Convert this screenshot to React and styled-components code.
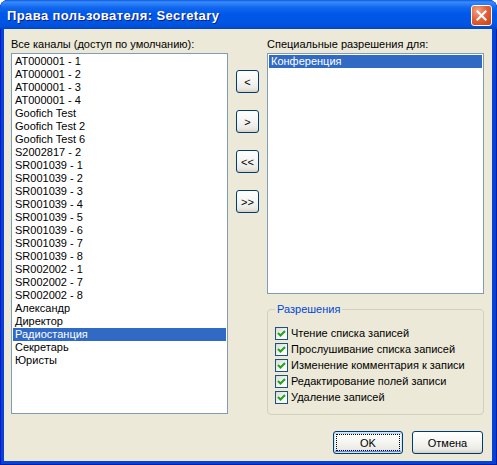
import React from 'react'
import styled, { createGlobalStyle } from "styled-components";

const GlobalStyle = createGlobalStyle`
    html, body { margin: 0; padding: 0; background: #fff; }
    body { font-family: "Liberation Sans", Arial, sans-serif; font-size: 11px; color: #000; }
`;

const Window = styled.div`
    width: 497px;
    height: 465px;
    display: flex;
    flex-direction: column;
    box-sizing: border-box;
    background: #0841d6;
    border-radius: 8px 8px 0 0;
    box-shadow: inset 1px 0 0 #0019cf, inset -1px 0 0 #001ea0, inset 0 -1px 0 #001ea0;
    overflow: hidden;
`;

const TitleBar = styled.div`
    height: 29px;
    flex: none;
    display: flex;
    align-items: center;
    justify-content: space-between;
    padding: 0 5px 0 7px;
    background: linear-gradient(to bottom,
        #0a5ae6 0px, #3c8cf8 2px, #2a7df5 4px, #0e66ee 8px,
        #0058ea 14px, #0056e4 22px, #0052dd 26px, #0046c6 29px);
    border-radius: 8px 8px 0 0;
`;

const Title = styled.span`
    color: #fff;
    font-family: "Liberation Sans", Arial, sans-serif;
    font-weight: bold;
    font-size: 13px;
    letter-spacing: 0.4px;
    text-shadow: 1px 1px 0 #0a1e8a;
    margin-top: 2px;
`;

const CloseButton = styled.div`
    width: 21px;
    height: 21px;
    box-sizing: border-box;
    border: 1px solid #fff;
    border-radius: 3px;
    background: radial-gradient(circle at 30% 25%, #f4a283 0%, #e5623a 45%, #cc3d12 100%);
    display: flex;
    align-items: center;
    justify-content: center;
    margin-top: 2px;
`;

const Client = styled.div`
    flex: 1;
    margin: 0 5px 4px 4px;
    background: #ece9d8;
    padding: 9px 8px 0 7px;
    display: flex;
    flex-direction: column;
`;

const Main = styled.div`
    display: flex;
    gap: 8px;
`;

const Column = styled.div`
    width: 217px;
    display: flex;
    flex-direction: column;
`;

const Label = styled.div`
    line-height: 13px;
    margin-bottom: 2px;
    white-space: nowrap;
`;

const ListBox = styled.div`
    height: ${p => p.$height}px;
    box-sizing: border-box;
    border: 1px solid #7f9db9;
    background: #fff;
    padding: 1px;
    overflow: hidden;
`;

const Item = styled.div`
    height: 13px;
    line-height: 13px;
    padding-left: 2px;
    white-space: nowrap;
    background: ${p => (p.$selected ? "#316ac5" : "transparent")};
    color: ${p => (p.$selected ? "#fff" : "#000")};
`;

const Arrows = styled.div`
    width: 23px;
    display: flex;
    flex-direction: column;
    gap: 17px;
    padding-top: 32px;
`;

const XpButton = styled.button`
    width: ${p => p.$width || 23}px;
    height: 23px;
    box-sizing: border-box;
    padding: 0;
    font-family: "Liberation Sans", Arial, sans-serif;
    font-size: 11px;
    color: #000;
    border: 1px solid #003c74;
    border-radius: 3px;
    background: linear-gradient(to bottom, #ffffff 0%, #f7f7f4 40%, #ecebe6 80%, #d8d4c8 100%);
    box-shadow: ${p => (p.$default
        ? "inset 0 0 0 1px #cee7ff, inset 0 -1px 0 1px #6982ee, inset 0 1px 0 1px #bcd4f6"
        : "inset 0 -1px 0 #d6d0c5")};
    outline: ${p => (p.$default ? "1px dotted #000" : "none")};
    outline-offset: -4px;
    display: flex;
    align-items: center;
    justify-content: center;
`;

const GroupBox = styled.fieldset`
    margin: 9px 0 0 0;
    padding: 9px 7px 7px 7px;
    border: 1px solid #d0d0bf;
    border-radius: 4px;
    min-width: 0;
    height: 112px;
    box-sizing: border-box;
`;

const Legend = styled.legend`
    padding: 0 2px;
    color: #0046d5;
    line-height: 13px;
`;

const CheckRow = styled.label`
    height: 16px;
    display: flex;
    align-items: center;
    gap: 3px;
    white-space: nowrap;
`;

const CheckBox = styled.span`
    width: 13px;
    height: 13px;
    box-sizing: border-box;
    border: 1px solid #1c5180;
    background: linear-gradient(135deg, #dcdcd7 0%, #f4f4f0 60%, #ffffff 100%);
    display: flex;
    align-items: center;
    justify-content: center;
    flex: none;
`;

const Footer = styled.div`
    display: flex;
    justify-content: flex-end;
    gap: 9px;
    margin-top: 16px;
    padding-right: 1px;
`;

const channels = [
    "AT000001 - 1", "AT000001 - 2", "AT000001 - 3", "AT000001 - 4",
    "Goofich Test", "Goofich Test 2", "Goofich Test 6", "S2002817 - 2",
    "SR001039 - 1", "SR001039 - 2", "SR001039 - 3", "SR001039 - 4",
    "SR001039 - 5", "SR001039 - 6", "SR001039 - 7", "SR001039 - 8",
    "SR002002 - 1", "SR002002 - 7", "SR002002 - 8",
    "Александр", "Директор", "Радиостанция", "Секретарь", "Юристы",
];

const permissions = [
    "Чтение списка записей",
    "Прослушивание списка записей",
    "Изменение комментария к записи",
    "Редактирование полей записи",
    "Удаление записей",
];

function Check() {
    return (
        <CheckBox>
            <svg width="9" height="9" viewBox="0 0 9 9">
                <path d="M1 4 L3.5 6.5 L8 2" fill="none" stroke="#21a121" strokeWidth="2" />
            </svg>
        </CheckBox>
    );
}

export default function App() {
    return (
        <React.Fragment>
            <GlobalStyle />
            <Window>
                <TitleBar>
                    <Title>Права пользователя: Secretary</Title>
                    <CloseButton>
                        <svg width="11" height="11" viewBox="0 0 11 11">
                            <path d="M1.5 1.5 L9.5 9.5 M9.5 1.5 L1.5 9.5" stroke="#fff" strokeWidth="2.2" strokeLinecap="square" />
                        </svg>
                    </CloseButton>
                </TitleBar>
                <Client>
                    <Main>
                        <Column>
                            <Label>Все каналы (доступ по умолчанию):</Label>
                            <ListBox $height={361}>
                                {channels.map(name => (
                                    <Item key={name} $selected={name === "Радиостанция"}>{name}</Item>
                                ))}
                            </ListBox>
                        </Column>
                        <Arrows>
                            <XpButton>&lt;</XpButton>
                            <XpButton>&gt;</XpButton>
                            <XpButton>&lt;&lt;</XpButton>
                            <XpButton>&gt;&gt;</XpButton>
                        </Arrows>
                        <Column>
                            <Label>Специальные разрешения для:</Label>
                            <ListBox $height={241}>
                                <Item $selected>Конференция</Item>
                            </ListBox>
                            <GroupBox>
                                <Legend>Разрешения</Legend>
                                {permissions.map(text => (
                                    <CheckRow key={text}>
                                        <Check />
                                        {text}
                                    </CheckRow>
                                ))}
                            </GroupBox>
                        </Column>
                    </Main>
                    <Footer>
                        <XpButton $width={70} $default>OK</XpButton>
                        <XpButton $width={71}>Отмена</XpButton>
                    </Footer>
                </Client>
            </Window>
        </React.Fragment>
    )
}
